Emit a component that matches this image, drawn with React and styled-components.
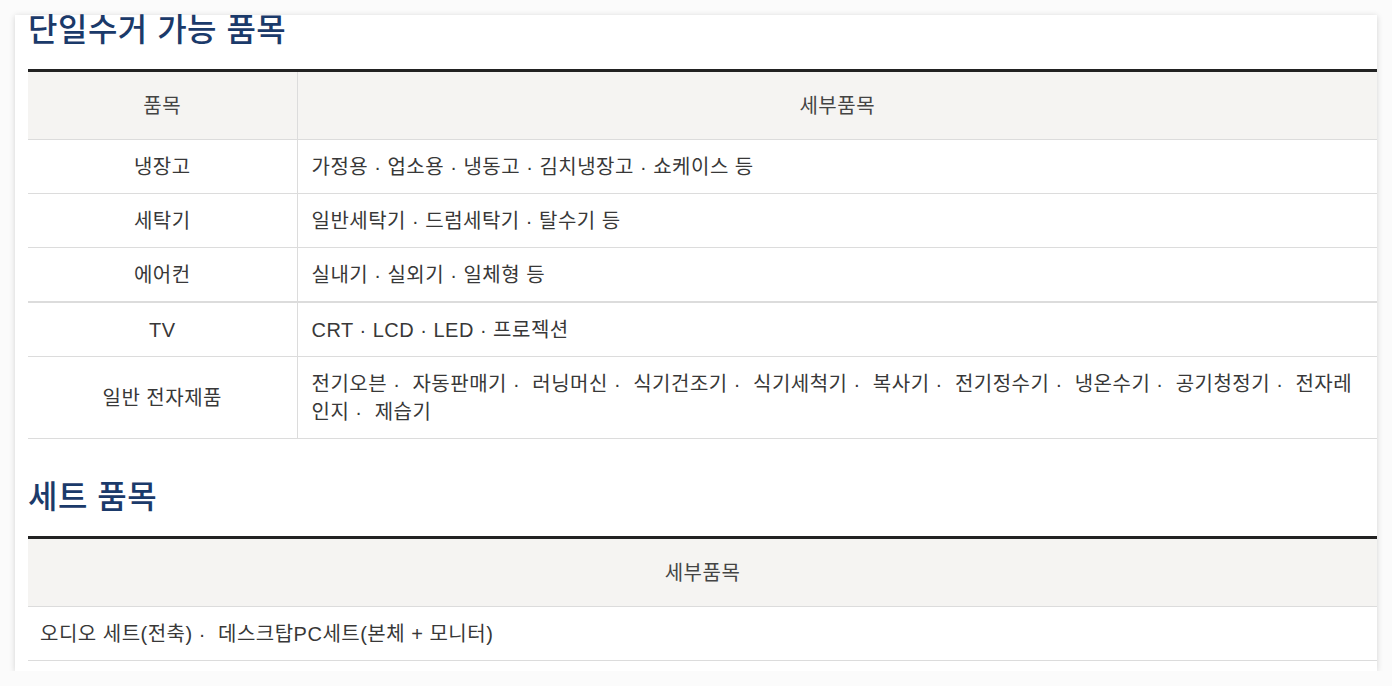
import React from 'react'
import styled, { createGlobalStyle } from 'styled-components'

const GlobalStyle = createGlobalStyle`
  body {
    margin: 0;
    background: #fbfbfb;
    font-family: "Liberation Sans", "Noto Sans CJK KR", sans-serif;
  }
`

const single = [
  { name: '냉장고', detail: '가정용 · 업소용 · 냉동고 · 김치냉장고 · 쇼케이스 등' },
  { name: '세탁기', detail: '일반세탁기 · 드럼세탁기 · 탈수기 등' },
  { name: '에어컨', detail: '실내기 · 실외기 · 일체형 등', thick: true },
  { name: 'TV', detail: 'CRT · LCD · LED · 프로젝션' },
  {
    name: '일반 전자제품',
    detail: ['전기오븐', '자동판매기', '러닝머신', '식기건조기', '식기세척기', '복사기', '전기정수기', '냉온수기', '공기청정기', '전자레인지', '제습기'].join(' ·\u00a0 '),
  },
]

const sets = ['오디오 세트(전축)', '데스크탑PC세트(본체 + 모니터)'].join(' ·\u00a0 ')

const App = () => {
  return (
    <>
      <GlobalStyle />
      <Card>
        <Title>단일수거 가능 품목</Title>
        <Table>
          <colgroup>
            <col style={{ width: 269 }} />
            <col />
          </colgroup>
          <thead>
            <tr>
              <Th>품목</Th>
              <Th>세부품목</Th>
            </tr>
          </thead>
          <tbody>
            {single.map((row) => (
              <tr key={row.name}>
                <NameCell $thick={row.thick}>{row.name}</NameCell>
                <DetailCell $thick={row.thick}>{row.detail}</DetailCell>
              </tr>
            ))}
          </tbody>
        </Table>

        <Title $gap>세트 품목</Title>
        <Table>
          <thead>
            <tr>
              <Th>세부품목</Th>
            </tr>
          </thead>
          <tbody>
            <tr>
              <DetailCell $wide>{sets}</DetailCell>
            </tr>
          </tbody>
        </Table>
      </Card>
    </>
  )
}

export default App

const Card = styled.div`
  margin: 15px 15px 0 15px;
  width: 1362px;
  box-sizing: border-box;
  background: #fff;
  padding: 0 0 10px 13px;
  box-shadow: 0 1px 6px rgba(0, 0, 0, 0.16);
`

const Title = styled.h2`
  margin: ${(p) => (p.$gap ? '43px' : '0')} 0 24px;
  font-size: 32px;
  line-height: 30px;
  letter-spacing: 0.5px;
  font-weight: 500;
  color: #1b3a6a;
`

const Table = styled.table`
  width: 100%;
  border-collapse: collapse;
  table-layout: fixed;
  border-top: 3px solid #222;
  font-size: 20px;
  line-height: 28px;
  letter-spacing: 0.5px;
  color: #383838;
`

const Th = styled.th`
  background: #f5f4f2;
  font-weight: 400;
  height: 67px;
  padding: 0;
  border-bottom: 1px solid #dcdcdc;
  border-left: 1px solid #dcdcdc;
  color: #444;

  &:first-child {
    border-left: none;
  }
`

const NameCell = styled.td`
  text-align: center;
  padding: 13px 0 12px;
  border-bottom: ${(p) => (p.$thick ? '2px' : '1px')} solid #dcdcdc;
`

const DetailCell = styled.td`
  padding: ${(p) => (p.$wide ? '13px 12px 12px' : '13px 13px 12px 14px')};
  border-bottom: ${(p) => (p.$thick ? '2px' : '1px')} solid #dcdcdc;
  border-left: ${(p) => (p.$wide ? 'none' : '1px solid #dcdcdc')};
`
